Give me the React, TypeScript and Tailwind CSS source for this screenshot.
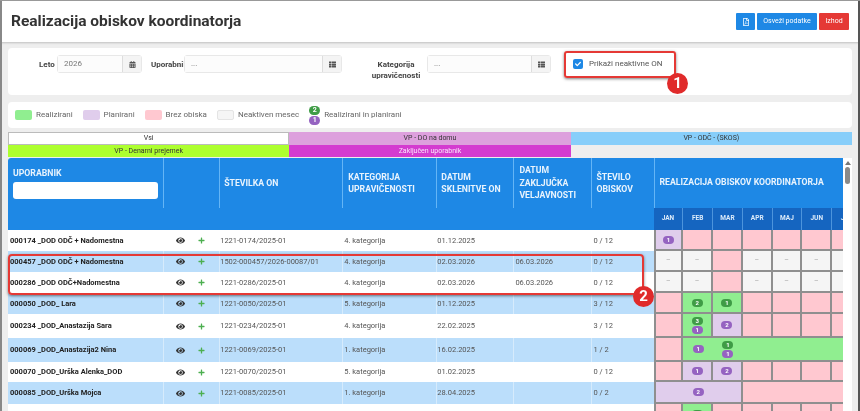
import { FaCalendarAlt, FaCheck, FaEye, FaPlus, FaRegFilePdf, FaThList } from 'react-icons/fa'

type Tone = 'pink' | 'green' | 'purple' | 'off'

interface MonthCell {
  tone: Tone
  span?: number
  green?: number
  purple?: number
  open?: boolean
}

interface Row {
  name: string
  on: string
  cat: string
  from: string
  to?: string
  count: string
  height: string
  months: MonthCell[]
}

const toneClass: Record<Tone, string> = {
  pink: 'bg-[#ffc8d0]',
  green: 'bg-[#90ee90]',
  purple: 'bg-[#e0cdec]',
  off: 'bg-[#f5f5f5]',
}

const pink = (n: number): MonthCell[] => Array.from({ length: n }, () => ({ tone: 'pink' as Tone }))
const off = (n: number): MonthCell[] => Array.from({ length: n }, () => ({ tone: 'off' as Tone }))

// only these fit in the visible part of the scroller
const MONTHS = ['JAN', 'FEB', 'MAR', 'APR', 'MAJ', 'JUN', 'JUL']

const rows: Row[] = [
  {
    name: '000174 _DOD ODČ + Nadomestna', on: '1221-0174/2025-01', cat: '4. kategorija', from: '01.12.2025', count: '0 / 12', height: 'h-[21px]',
    months: [{ tone: 'purple', purple: 1 }, ...pink(6)],
  },
  {
    name: '000457 _DOD ODČ + Nadomestna', on: '1502-000457/2026-00087/01', cat: '4. kategorija', from: '02.03.2026', to: '06.03.2026', count: '0 / 12', height: 'h-[21px]',
    months: [...off(2), { tone: 'pink' }, ...off(4)],
  },
  {
    name: '000286 _DOD ODČ+Nadomestna', on: '1221-0286/2025-01', cat: '4. kategorija', from: '02.03.2026', to: '06.03.2026', count: '0 / 12', height: 'h-[21px]',
    months: [...off(2), { tone: 'pink' }, ...off(4)],
  },
  {
    name: '000050 _DOD_ Lara', on: '1221-0050/2025-01', cat: '5. kategorija', from: '01.12.2025', count: '3 / 12', height: 'h-[21px]',
    months: [{ tone: 'pink' }, { tone: 'green', green: 2 }, { tone: 'green', green: 1 }, ...pink(4)],
  },
  {
    name: '000234 _DOD_Anastazija Sara', on: '1221-0234/2025-01', cat: '4. kategorija', from: '22.02.2025', count: '3 / 12', height: 'h-[24px]',
    months: [{ tone: 'pink' }, { tone: 'green', green: 3, purple: 1 }, { tone: 'purple', purple: 2 }, ...pink(4)],
  },
  {
    name: '000069 _DOD_Anastazija2 Nina', on: '1221-0069/2025-01', cat: '1. kategorija', from: '16.02.2025', count: '1 / 2', height: 'h-[24px]',
    months: [{ tone: 'pink' }, { tone: 'green', purple: 1, open: true }, { tone: 'green', green: 1, purple: 1, open: true }, { tone: 'green', span: 4 }],
  },
  {
    name: '000070 _DOD_Urška Alenka_DOD', on: '1221-0070/2025-01', cat: '5. kategorija', from: '01.02.2025', count: '0 / 12', height: 'h-[20px]',
    months: [{ tone: 'pink' }, { tone: 'purple', purple: 1 }, { tone: 'purple', purple: 2 }, ...pink(4)],
  },
  {
    name: '000085 _DOD_Urška Mojca', on: '1221-0085/2025-01', cat: '1. kategorija', from: '28.04.2025', count: '0 / 2', height: 'h-[22px]',
    months: [{ tone: 'purple', span: 3, purple: 2 }, { tone: 'pink', span: 4 }],
  },
  {
    name: '000189 _BP_ANAS Kl', on: '1221-0189/2025-01', cat: '5. kategorija', from: '08.05.2025', count: '1 / 12', height: 'h-[22px]',
    months: [{ tone: 'pink' }, { tone: 'green', green: 1 }, ...pink(5)],
  },
]

function Pill({ color, n, big = false }: { color: 'green' | 'purple'; n: number; big?: boolean }) {
  return (
    <span
      className={
        'flex w-[11px] items-center justify-center rounded-full leading-none font-bold text-white ' +
        (big ? 'h-[9px] text-[7px] ' : 'h-[8px] text-[6px] ') +
        (color === 'green' ? 'bg-[#3f9c46]' : 'bg-[#9563c1]')
      }
    >
      {n}
    </span>
  )
}

function Swatch({ className, label }: { className: string; label: string }) {
  return (
    <div className="flex items-center gap-[4px]">
      <span className={'h-[10px] w-[17px] rounded-[2px] ' + className} />
      <span>{label}</span>
    </div>
  )
}

function InputGroup({ className, value, icon }: { className: string; value: string; icon: React.ReactNode }) {
  return (
    <div className={'flex h-[18px] rounded-[3px] border border-[#e8e8e8] ' + className}>
      <div className="flex flex-1 items-center bg-[#fcfcfc] pl-[6px] text-[8px] font-normal text-[#777]">{value}</div>
      <div className="flex w-[19px] items-center justify-center border-l border-[#ddd] bg-[#f4f4f4] text-[7px] text-[#555]">{icon}</div>
    </div>
  )
}

function HeadCell({ children, pad = 'pl-[5px]', sep = true }: { children?: React.ReactNode; pad?: string; sep?: boolean }) {
  return (
    <th rowSpan={2} className="bg-[#1e88e5] p-0 align-top">
      <div className={'flex h-[50px] items-center text-left text-[8.7px] leading-[12.5px] font-bold text-[#e8f3fd] ' + pad + (sep ? ' border-r border-[#64b5f6]' : '')}>
        {children}
      </div>
    </th>
  )
}

export default function App() {
  return (
    <div className="relative h-[411px] w-[860px] overflow-hidden border-t border-[#999] bg-[#eeeeee] font-['Roboto',sans-serif] text-[#444] blur-[0.5px]">
      <header className="flex h-[41px] items-center justify-between bg-white pr-[11px] pl-[11px] shadow-[0_1px_2px_rgba(0,0,0,0.2)]">
        <h1 className="text-[15.5px] font-bold text-[#333]">Realizacija obiskov koordinatorja</h1>
        <div className="flex gap-[2px] text-[7px] text-white">
          <button className="flex h-[17px] w-[19px] items-center justify-center rounded-[1px] bg-[#1e88e5]">
            <FaRegFilePdf className="h-[8px] w-[8px]" />
          </button>
          <button className="h-[17px] w-[60px] rounded-[1px] bg-[#1e88e5]">Osveži podatke</button>
          <button className="h-[17px] w-[30px] rounded-[1px] bg-[#e53935]">Izhod</button>
        </div>
      </header>

      <div className="ml-[8px] w-[844px]">
        <section className="mt-[6px] flex h-[47px] rounded-[4px] bg-white pt-[7px] text-[8px] font-bold">
          <span className="mt-[4px] ml-[31px] w-[15px] text-right">Leto</span>
          <InputGroup className="ml-[3px] w-[85px]" value="2026" icon={<FaCalendarAlt />} />
          <span className="mt-[4px] ml-[9px] w-[33px]">Uporabnik</span>
          <InputGroup className="w-[158px]" value="..." icon={<FaThList />} />
          <span className="mt-[4px] ml-[29px] w-[50px] text-center leading-[11px]">
            Kategorija upravičenosti
          </span>
          <InputGroup className="ml-[6px] w-[124px]" value="..." icon={<FaThList />} />
          <label className="mt-[3px] ml-[22px] flex items-center gap-[6px] self-start text-[8px] font-normal text-[#555]">
            <span className="flex h-[10px] w-[10px] items-center justify-center rounded-[2px] bg-[#1e88e5] text-[6px] text-white">
              <FaCheck />
            </span>
            Prikaži neaktivne ON
          </label>
        </section>

        <section className="mt-[7px] flex h-[26px] items-center gap-[10px] rounded-[4px] bg-white pl-[7px] text-[8px] text-[#666]">
          <Swatch className="bg-[#90ee90]" label="Realizirani" />
          <Swatch className="bg-[#e0cdec]" label="Planirani" />
          <Swatch className="bg-[#ffc8d0]" label="Brez obiska" />
          <Swatch className="border border-[#e4e4e4] bg-[#f5f5f5]" label="Neaktiven mesec" />
          <div className="flex items-center gap-[4px]">
            <div className="flex flex-col">
              <Pill color="green" n={2} big />
              <span className="h-[1px]" />
              <Pill color="purple" n={1} big />
            </div>
            <span>Realizirani in planirani</span>
          </div>
        </section>

        <section className="mt-[4px] grid h-[25px] grid-cols-3 grid-rows-2 text-center text-[7px] leading-[12px] text-[#333]">
          <div className="border border-[#bbb] bg-white leading-[10px]">Vsi</div>
          <div className="bg-[#dda0dd]">VP - DO na domu</div>
          <div className="bg-[#87cefa]">VP - ODČ - (SKOS)</div>
          <div className="bg-[#adff2f]">VP - Denarni prejemek</div>
          <div className="bg-[#d43bd0] text-[#fbe6fb]">Zaključen uporabnik</div>
        </section>

        <div className="mt-[1px] flex h-[260px]">
          <div className="w-[836px] overflow-hidden">
            <table className="w-[854px] table-fixed border-separate border-spacing-0 text-[7.5px]">
              <colgroup>
                <col className="w-[156px]" />
                <col className="w-[56px]" />
                <col className="w-[123px]" />
                <col className="w-[94px]" />
                <col className="w-[77px]" />
                <col className="w-[78px]" />
                <col className="w-[61px]" />
                {MONTHS.map((m) => (
                  <col key={m} className="w-[29.75px]" />
                ))}
              </colgroup>
              <thead>
                <tr>
                  <th rowSpan={2} className="rounded-tl-[3px] bg-[#1e88e5] p-0 align-top">
                    <div className="h-[50px] border-r border-[#64b5f6] px-[5px] pt-[10px] text-left text-[8.7px] leading-[10px] font-bold text-[#e8f3fd]">
                      UPORABNIK
                      <input className="mt-[4px] block h-[17px] w-[145px] rounded-[3px] bg-white" />
                    </div>
                  </th>
                  <HeadCell />
                  <HeadCell pad="pl-[4px]">ŠTEVILKA ON</HeadCell>
                  <HeadCell>
                    KATEGORIJA
                    <br />
                    UPRAVIČENOSTI
                  </HeadCell>
                  <HeadCell pad="pl-[4px]">
                    DATUM
                    <br />
                    SKLENITVE ON
                  </HeadCell>
                  <HeadCell>
                    DATUM
                    <br />
                    ZAKLJUČKA
                    <br />
                    VELJAVNOSTI
                  </HeadCell>
                  <HeadCell pad="pl-[4px]" sep={false}>
                    ŠTEVILO
                    <br />
                    OBISKOV
                  </HeadCell>
                  <th colSpan={7} className="h-[50px] border-l border-[#64b5f6] bg-[#1e88e5] px-[5px] text-left text-[8.7px] font-bold text-[#e8f3fd]">
                    REALIZACIJA OBISKOV KOORDINATORJA
                  </th>
                </tr>
                <tr>
                  {MONTHS.map((m) => (
                    <th key={m} className="h-[22px] border-r border-[#4d94dc] bg-[#1565c0] p-0 text-center text-[6.5px] font-bold text-[#dcebfa]">
                      {m}
                    </th>
                  ))}
                </tr>
              </thead>
              <tbody>
                {rows.map((row, i) => (
                  <tr key={row.name} className={i % 2 === 1 ? 'bg-[#bbdefb]' : 'bg-white'}>
                    <td className={'border-r border-white/40 p-0 pl-[2px] font-bold whitespace-nowrap text-[#222] ' + row.height}>{row.name}</td>
                    <td className="border-r border-white/40 p-0">
                      <div className="flex items-center text-[9px]">
                        <FaEye className="ml-[12px] text-[#333]" />
                        <FaPlus className="ml-[13px] h-[7px] w-[7px] text-[#4caf50]" />
                      </div>
                    </td>
                    <td className="border-r border-white/40 p-0 whitespace-nowrap text-[#555]">{row.on}</td>
                    <td className="border-r border-white/40 p-0 pl-[1px] text-[#555]">{row.cat}</td>
                    <td className="border-r border-white/40 p-0 text-[#555]">{row.from}</td>
                    <td className="border-r border-white/40 p-0 pl-[1px] text-[#555]">{row.to}</td>
                    <td className="p-0 pl-[1px] text-[#555]">{row.count}</td>
                    {row.months.map((cell, j) => (
                      <td
                        key={j}
                        colSpan={cell.span}
                        className={
                          'border-b-2 border-[#8f8f8f] p-0 ' +
                          toneClass[cell.tone] +
                          (j === 0 ? ' border-l-2' : '') +
                          (cell.open ? '' : ' border-r-2')
                        }
                      >
                        <div className="flex flex-col items-center justify-center gap-[1px]">
                          {cell.tone === 'off' && <span className="text-[7px] leading-none text-[#aaa]">–</span>}
                          {cell.green !== undefined && <Pill color="green" n={cell.green} />}
                          {cell.purple !== undefined && <Pill color="purple" n={cell.purple} />}
                        </div>
                      </td>
                    ))}
                  </tr>
                ))}
              </tbody>
            </table>
          </div>
          <div className="relative w-[9px] bg-white">
            <div className="mx-auto mt-[3px] h-0 w-0 border-x-[3px] border-b-[4px] border-x-transparent border-b-[#777]" />
            <div className="mx-auto mt-[2px] h-[17px] w-[5px] rounded-full bg-[#8a8a8a]" />
          </div>
        </div>
      </div>

      <div className="absolute top-0 left-0 h-full w-[2px] bg-[#888]" />
      <div className="absolute top-0 right-0 h-full w-[2px] bg-[#555]" />

      <div className="absolute top-[50px] left-[564px] h-[27px] w-[112px] rounded-[3px] border-2 border-[#e53935] shadow-[0_1px_3px_rgba(0,0,0,0.5)]" />
      <div className="absolute top-[72px] left-[667px] flex h-[21px] w-[21px] items-center justify-center rounded-full bg-[#e02b2b] text-[15px] font-bold text-white">1</div>
      <div className="absolute top-[253px] left-[8px] h-[41px] w-[636px] rounded-[4px] border-2 border-[#e53935] shadow-[0_1px_3px_rgba(0,0,0,0.5)]" />
      <div className="absolute top-[285px] left-[633px] flex h-[21px] w-[21px] items-center justify-center rounded-full bg-[#e02b2b] text-[15px] font-bold text-white">2</div>
    </div>
  )
}
